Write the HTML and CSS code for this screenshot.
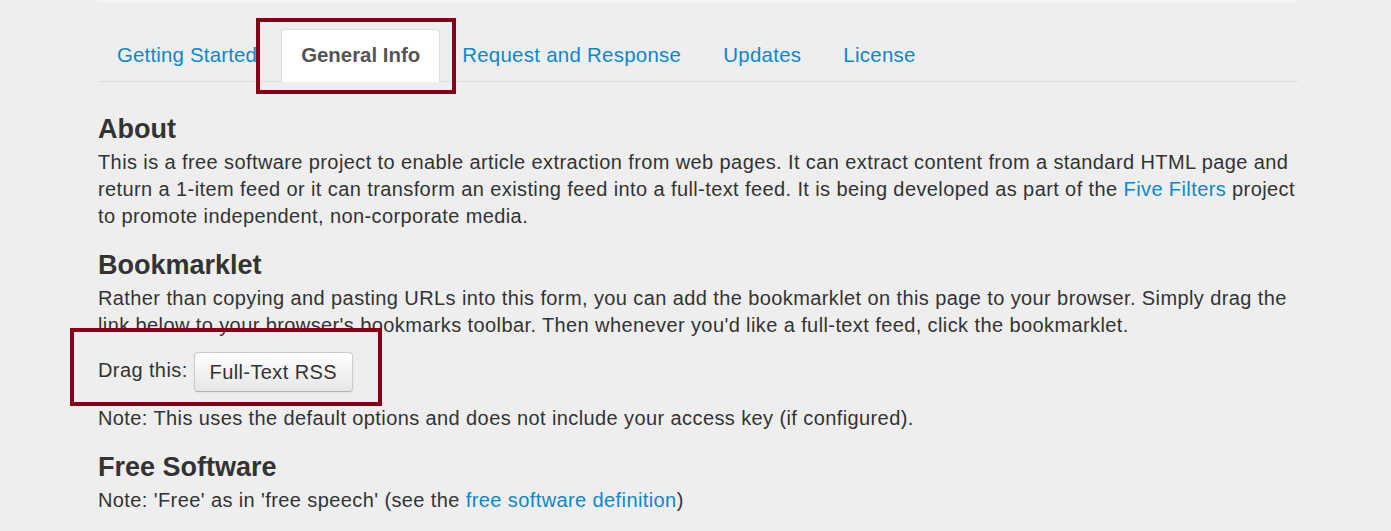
FILE: index.html
```html
<!DOCTYPE html>
<html lang="en">
<head>
    <meta charset="UTF-8">
    <title>Full-Text RSS</title>
    <link rel="stylesheet" href="styles.css">
</head>
<body>
    <div class="page">
        <div class="top-strip"></div>

        <ul class="nav-tabs">
            <li><a href="#start">Getting Started</a></li>
            <li class="active"><a href="#general">General Info</a></li>
            <li><a href="#request">Request and Response</a></li>
            <li><a href="#updates">Updates</a></li>
            <li><a href="#license">License</a></li>
        </ul>

        <section class="tab-pane" id="general">
            <h3>About</h3>
            <p>This is a free software project to enable article extraction from web pages. It can extract content from a standard HTML page and return a 1-item feed or it can transform an existing feed into a full-text feed. It is being developed as part of the <a href="#fivefilters">Five Filters</a> project to promote independent, non-corporate media.</p>

            <h3>Bookmarklet</h3>
            <p>Rather than copying and pasting URLs into this form, you can add the bookmarklet on this page to your browser. Simply drag the link below to your browser's bookmarks toolbar. Then whenever you'd like a full-text feed, click the bookmarklet.</p>
            <p class="drag-line">Drag this: <a class="btn" href="#bookmarklet">Full-Text RSS</a></p>
            <p>Note: This uses the default options and does not include your access key (if configured).</p>

            <h3>Free Software</h3>
            <p>Note: 'Free' as in 'free speech' (see the <a href="#fsd">free software definition</a>)</p>
        </section>
    </div>
</body>
</html>
```

FILE: styles.css
```css
body {
    margin: 0;
    background-color: #eeeeee;
    color: #333333;
    font-family: "Liberation Sans", Arial, sans-serif;
    font-size: 20px;
    letter-spacing: 0.4px;
    line-height: 27px;
}

a {
    color: #0a88cf;
    text-decoration: none;
}

.page {
    width: 1200px;
    margin-left: 98px;
}

.top-strip {
    height: 2px;
    background-color: #f5f5f5;
}

/* tabs */
.nav-tabs {
    display: flex;
    list-style: none;
    margin: 27px 0 30px;
    padding: 0;
    border-bottom: 1px solid #dddddd;
}

.nav-tabs li {
    margin: 0 2px -1px 0;
}

.nav-tabs li:first-child {
    margin-right: 4px;
}

.nav-tabs a {
    display: block;
    padding: 0 19px;
    line-height: 51px;
    font-size: 20.4px;
    letter-spacing: 0.3px;
    border: 1px solid transparent;
    border-radius: 4px 4px 0 0;
}

.nav-tabs li:first-child a {
    padding-left: 18px;
    letter-spacing: 0.2px;
}

.nav-tabs .active {
    position: relative;
}

.nav-tabs .active a {
    background-color: #ffffff;
    border-color: #dddddd #dddddd transparent;
    color: #555555;
    font-weight: bold;
    letter-spacing: 0;
}

/* red marker round the selected tab */
.nav-tabs .active::after {
    content: "";
    position: absolute;
    left: -25px;
    top: -11px;
    width: 192px;
    height: 68px;
    border: 4px solid #850019;
}

/* content */
h3 {
    margin: 18px 0 3px;
    font-size: 27px;
    line-height: 34px;
    letter-spacing: 0;
}

p {
    margin: 0 0 13px;
}

.drag-line {
    margin-top: -2px;
    line-height: 40px;
    position: relative;
}

.drag-line::after {
    content: "";
    position: absolute;
    left: -28px;
    top: -22px;
    width: 304px;
    height: 70px;
    border: 4px solid #850019;
}

.btn {
    display: inline-block;
    vertical-align: middle;
    padding: 0 15px;
    line-height: 38px;
    color: #333333;
    background-image: linear-gradient(to bottom, #ffffff, #e6e6e6);
    border: 1px solid #cccccc;
    border-bottom-color: #b3b3b3;
    border-radius: 4px;
    box-shadow: inset 0 1px 0 rgba(255, 255, 255, 0.2), 0 1px 2px rgba(0, 0, 0, 0.05);
}
```
